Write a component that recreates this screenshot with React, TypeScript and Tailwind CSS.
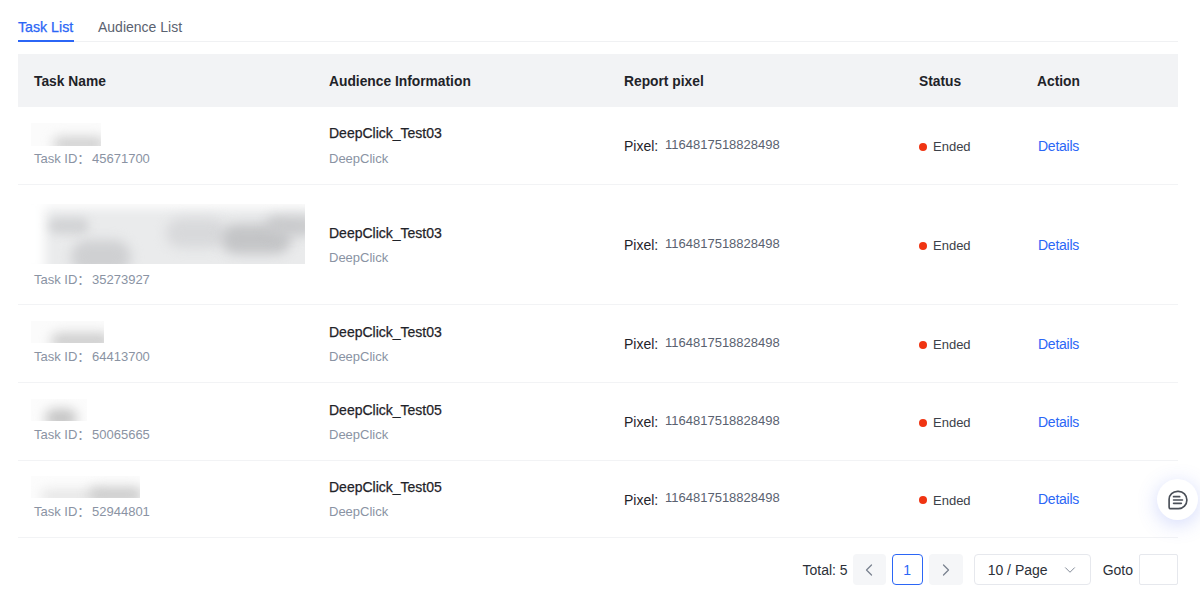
import React from "react";
import { ChevronLeft, ChevronRight, ChevronDown } from "lucide-react";

type Row = { id: string; aud: string; h: string; nameCell: string; idGap: string; audTop: string; subTop: string; blur: React.ReactNode };

const Blob = ({ c }: { c: string }) => <div className={"absolute " + c} />;

const rows: Row[] = [
  {
    id: "45671700",
    aud: "DeepClick_Test03",
    h: "h-[78px]",
    nameCell: "",
    idGap: "mt-[3px]",
    audTop: "mt-[-1px]",
    subTop: "mt-[5px]",
    blur: (
      <div className="relative ml-[-3px] h-[23px] w-[70px] overflow-hidden bg-[#fbfbfb]">
        <Blob c="left-[22px] top-[14px] h-[14px] w-[52px] rounded-full bg-[#cfcfcf] blur-[6px]" />
      </div>
    ),
  },
  {
    id: "35273927",
    aud: "DeepClick_Test03",
    h: "h-[120px]",
    nameCell: "pt-[4px]",
    idGap: "mt-[6px]",
    audTop: "mt-0",
    subTop: "mt-[4px]",
    blur: (
      <div className="relative ml-[-3px] h-[60px] w-[274px] overflow-hidden bg-[#eaebec]">
        <Blob c="left-[-10px] top-[-10px] h-[80px] w-[24px] bg-white blur-[6px]" />
        <Blob c="left-0 top-[-10px] h-[14px] w-[290px] bg-white blur-[6px]" />
        <Blob c="left-[18px] top-[14px] h-[16px] w-[40px] rounded-full bg-[#d2d3d5] blur-[5px]" />
        <Blob c="left-[40px] top-[36px] h-[34px] w-[60px] rounded-full bg-[#cfd0d2] blur-[6px]" />
        <Blob c="left-[135px] top-[14px] h-[30px] w-[60px] rounded-full bg-[#d8d9db] blur-[6px]" />
        <Blob c="left-[190px] top-[20px] h-[30px] w-[70px] rounded-full bg-[#c4c5c7] blur-[6px]" />
        <Blob c="left-[235px] top-[12px] h-[20px] w-[50px] rounded-full bg-[#c9cacc] blur-[6px]" />
      </div>
    ),
  },
  {
    id: "64413700",
    aud: "DeepClick_Test03",
    h: "h-[78px]",
    nameCell: "",
    idGap: "mt-[4px]",
    audTop: "mt-0",
    subTop: "mt-[4px]",
    blur: (
      <div className="relative ml-[-3px] h-[22px] w-[73px] overflow-hidden bg-[#fbfbfb]">
        <Blob c="left-[20px] top-[12px] h-[16px] w-[60px] rounded-full bg-[#cdcdcd] blur-[6px]" />
      </div>
    ),
  },
  {
    id: "50065665",
    aud: "DeepClick_Test05",
    h: "h-[78px]",
    nameCell: "",
    idGap: "mt-[4px]",
    audTop: "mt-0",
    subTop: "mt-[4px]",
    blur: (
      <div className="relative ml-[-3px] h-[22px] w-[56px] overflow-hidden bg-[#fcfcfc]">
        <Blob c="left-[14px] top-[10px] h-[18px] w-[32px] rounded-full bg-[#c4c4c4] blur-[6px]" />
      </div>
    ),
  },
  {
    id: "52944801",
    aud: "DeepClick_Test05",
    h: "h-[77px]",
    nameCell: "pb-[1px]",
    idGap: "mt-[4px]",
    audTop: "mt-0",
    subTop: "mt-[4px]",
    blur: (
      <div className="relative ml-[-3px] h-[22px] w-[109px] overflow-hidden bg-[#fcfcfc]">
        <Blob c="left-[10px] top-[14px] h-[12px] w-[60px] rounded-full bg-[#e4e4e4] blur-[6px]" />
        <Blob c="left-[58px] top-[11px] h-[16px] w-[54px] rounded-full bg-[#cbcbcb] blur-[6px]" />
      </div>
    ),
  },
];

const cols = "grid grid-cols-[295px_295px_295px_118px_157px]";

export default function App() {
  return (
    <div className="relative h-[605px] w-[1200px] overflow-hidden bg-white font-['Liberation_Sans','Noto_Sans_CJK_SC',Arial,sans-serif] text-[14px] text-[#1f2329]">
      <div className="w-[1178px] pl-[18px]">
        <div className="flex h-[42px] gap-[24px] border-b border-[#f0f1f3] pt-[17px]">
          <div className="h-[25px] w-[56px] border-b-2 border-[#2b66f6] text-[14.2px] leading-[20px] whitespace-nowrap text-[#2b66f6] [-webkit-text-stroke:0.25px_#2b66f6]">
            Task List
          </div>
          <div className="text-[14px] leading-[20px] text-[#5a6270]">Audience List</div>
        </div>

        <div className={cols + " mt-[12px] h-[53px] items-center bg-[#f2f3f5] pt-[3px] text-[13.8px] font-bold text-[#1f2329]"}>
          <div className="pl-[16px]">Task Name</div>
          <div className="pl-[16px]">Audience Information</div>
          <div className="pl-[16px]">Report pixel</div>
          <div className="pl-[16px]">Status</div>
          <div className="pl-[16px]">Action</div>
        </div>

        {rows.map((r) => (
          <div key={r.id} className={cols + " items-center border-b border-[#f2f3f5] " + r.h}>
            <div className={"pl-[16px] " + r.nameCell}>
              {r.blur}
              <div className={"flex h-[20px] items-center text-[13px] whitespace-nowrap text-[#8a93a3] " + r.idGap}>
                <span className="w-[58px]">Task ID：</span>
                <span>{r.id}</span>
              </div>
            </div>
            <div className="pl-[16px]">
              <div className={"h-[22px] leading-[22px] text-[#1f2329] [-webkit-text-stroke:0.25px_#1f2329] " + r.audTop}>{r.aud}</div>
              <div className={"h-[20px] text-[13px] leading-[20px] text-[#8a93a3] " + r.subTop}>DeepClick</div>
            </div>
            <div className="flex items-center pl-[16px]">
              <span className="mt-[2px] w-[41px]">Pixel:</span>
              <span className="mt-[-2px] text-[13px] text-[#5a6270]">1164817518828498</span>
            </div>
            <div className="flex items-center pt-[2px] pl-[16px] text-[13px] text-[#3c4149]">
              <span className="mr-[6px] h-[8px] w-[8px] rounded-full bg-[#f03412]" />
              <span className="mt-[1px]">Ended</span>
            </div>
            <div className="pt-[1px] pl-[17px] tracking-[-0.25px] text-[#2b66f6]">Details</div>
          </div>
        ))}

        <div className="mt-[16px] flex h-[31px] items-center justify-end text-[14px] text-[#2c3038]">
          <span className="mt-[2px] mr-[5px]">Total: 5</span>
          <div className="flex h-[31px] w-[33px] items-center justify-center rounded-[4px] bg-[#f5f6f8] text-[#7a8290]">
            <ChevronLeft size={20} strokeWidth={1.5} />
          </div>
          <div className="mx-[6px] flex h-[31px] w-[31px] items-center justify-center rounded-[4px] border border-[#2b66f6] pt-[2px] text-[#2b66f6]">
            1
          </div>
          <div className="flex h-[31px] w-[34px] items-center justify-center rounded-[4px] bg-[#f5f6f8] text-[#7a8290]">
            <ChevronRight size={20} strokeWidth={1.5} />
          </div>
          <div className="ml-[11px] flex h-[31px] w-[117px] items-center justify-between rounded-[4px] border border-[#e6e8ed] pr-[11px] pl-[13px]">
            <span className="mt-[2px]">10 / Page</span>
            <ChevronDown size={18} strokeWidth={1.25} className="text-[#7a8290]" />
          </div>
          <span className="mt-[2px] mr-[6px] ml-[12px]">Goto</span>
          <div className="h-[31px] w-[39px] rounded-[2px] border border-[#e6e8ed]" />
        </div>
      </div>

      <div className="absolute top-[479px] left-[1157px] flex h-[41px] w-[41px] items-center justify-center rounded-full bg-white shadow-[0_4px_20px_rgba(80,110,240,0.26)]">
        <svg width="20" height="20" viewBox="1 1 18 18" fill="none">
          <path
            d="M10.4 2.2h-.8C5.4 2.2 2 5.3 2 9.4v7.2c0 .7.5 1.2 1.2 1.2h7.2c4.2 0 7.6-3.4 7.6-7.8 0-4.4-3.4-7.8-7.6-7.8Z"
            stroke="#4a4f58"
            strokeWidth="1.5"
          />
          <path d="M6 7h5.5M6 10h8M6 13h7" stroke="#4a4f58" strokeWidth="1.5" strokeLinecap="round" />
        </svg>
      </div>
    </div>
  );
}
